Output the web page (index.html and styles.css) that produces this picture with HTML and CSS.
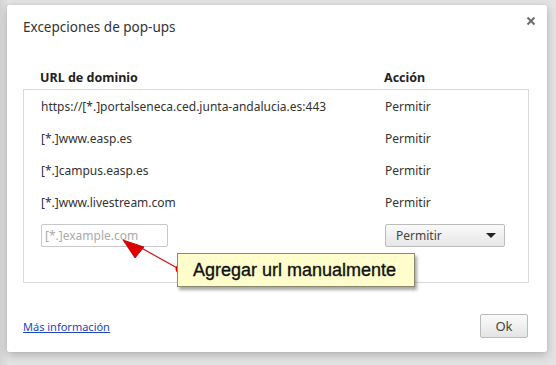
FILE: index.html
```html
<!DOCTYPE html>
<html lang="es">
<head>
    <meta charset="UTF-8">
    <title>Excepciones de pop-ups</title>
    <link rel="stylesheet" href="styles.css">
</head>
<body>
    <div class="backdrop">
        <div class="behind"></div>
        <div class="dialog">
            <div class="title-bar">
                <h1>Excepciones de pop-ups</h1>
                <svg class="close" width="10" height="10" viewBox="0 0 10 10">
                    <path d="M1.5 1.5 L8.5 8.5 M8.5 1.5 L1.5 8.5" stroke="#6d6d6d" stroke-width="2"/>
                </svg>
            </div>
            <div class="col-heads">
                <span class="col-url">URL de dominio</span>
                <span class="col-action">Acción</span>
            </div>
            <div class="list">
                <div class="row"><span class="col-url">https://[*.]portalseneca.ced.junta-andalucia.es:443</span><span class="col-action">Permitir</span></div>
                <div class="row"><span class="col-url">[*.]www.easp.es</span><span class="col-action">Permitir</span></div>
                <div class="row"><span class="col-url">[*.]campus.easp.es</span><span class="col-action">Permitir</span></div>
                <div class="row"><span class="col-url">[*.]www.livestream.com</span><span class="col-action">Permitir</span></div>
                <div class="row new-row">
                    <div class="col-url"><input class="url-input" type="text" placeholder="[*.]example.com"></div>
                    <div class="col-action">
                        <div class="select">Permitir <span class="caret"></span></div>
                    </div>
                </div>
            </div>
            <div class="footer">
                <a href="#" class="more">Más información</a>
                <button class="ok">Ok</button>
            </div>

            <svg class="pointer" width="80" height="50" viewBox="0 0 80 50">
                <line x1="20" y1="10" x2="63" y2="34" stroke="#d01010" stroke-width="1.2"/>
                <polygon points="7,5 28,12 19,23" fill="#e00000" stroke="#b00000" stroke-width="0.8"/>
                <circle cx="64" cy="34" r="4.5" fill="#e00000"/>
            </svg>
            <div class="callout">Agregar url manualmente</div>
        </div>
    </div>
</body>
</html>
```

FILE: styles.css
```css
* { box-sizing: border-box; }
body {
    margin: 0;
    font-family: "Noto Sans", "DejaVu Sans", sans-serif;
    color: #222;
}
.backdrop {
    position: relative;
    width: 556px;
    height: 365px;
    background-color: #e3e3e3;
    padding: 5px 9px 0 7px;
    overflow: hidden;
}
.behind {
    position: absolute;
    left: 0;
    top: 0;
    width: 10px;
    height: 365px;
    background: linear-gradient(90deg, #d4d4d4, #e6e6e6);
}
.dialog {
    position: relative;
    width: 540px;
    height: 347px;
    background-color: #fff;
    border-radius: 2px;
    box-shadow: 0 3px 10px rgba(0, 0, 0, 0.22), 0 0 1px rgba(0, 0, 0, 0.2);
    padding: 0 18px 0 16px;
    display: flex;
    flex-direction: column;
}
.title-bar {
    display: flex;
    justify-content: space-between;
    height: 46px;
    padding-top: 13px;
}
.title-bar h1 {
    margin: 0;
    font-size: 13.5px;
    font-weight: normal;
    color: #333;
}
.close {
    margin-top: -2px;
    margin-right: -7px;
}
.col-heads {
    display: flex;
    font-weight: bold;
    font-size: 12.5px;
    height: 38px;
    padding: 18px 0 0 17px;
    color: #222;
}
.col-url { width: 344px; }
.col-action { flex: 1; }
.list {
    border: 1px solid #d9d9d9;
    height: 194px;
    padding: 0 0 0 17px;
    font-size: 12px;
    color: #333;
}
.row {
    display: flex;
    align-items: center;
    height: 32px;
}
.new-row { height: 34px; }
.url-input {
    width: 127px;
    height: 23px;
    border: 1px solid #c8c8c8;
    border-radius: 2px;
    font-family: inherit;
    font-size: 12px;
    padding: 0 3px;
}
.url-input::placeholder { color: #aaa; }
.select {
    width: 120px;
    height: 23px;
    border: 1px solid #bcbcbc;
    border-radius: 2px;
    background: linear-gradient(#fafafa, #e6e6e6);
    display: flex;
    align-items: center;
    justify-content: space-between;
    padding: 0 8px 0 10px;
    color: #444;
}
.caret {
    width: 0;
    height: 0;
    border-left: 5px solid transparent;
    border-right: 5px solid transparent;
    border-top: 5px solid #222;
}
.footer {
    display: flex;
    justify-content: space-between;
    align-items: center;
    margin-top: 31px;
}
.more {
    font-size: 11px;
    color: #1d44b8;
}
.ok {
    width: 48px;
    height: 24px;
    border: 1px solid #bcbcbc;
    border-radius: 2px;
    background: linear-gradient(#fbfbfb, #e4e4e4);
    font-family: inherit;
    font-size: 13px;
    color: #444;
    margin-right: 1px;
}
.pointer {
    position: absolute;
    left: 109px;
    top: 230px;
}
.callout {
    position: absolute;
    left: 170px;
    top: 248px;
    width: 238px;
    height: 34px;
    background-color: #fefdcb;
    border: 1px solid #8a8a70;
    box-shadow: 2px 3px 3px rgba(0, 0, 0, 0.35);
    font-family: "Liberation Sans", Arial, sans-serif;
    font-size: 18px;
    color: #111;
    -webkit-text-stroke: 0.35px #111;
    padding: 6px 0 0 15px;
}
```
